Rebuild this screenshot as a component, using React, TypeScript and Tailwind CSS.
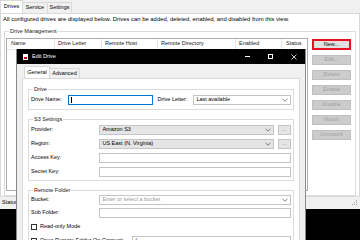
import React from "react";

const F = { fontFamily: '"Liberation Sans", Arial, sans-serif' };

function Chevron() {
  return (
    <svg width="6" height="4" viewBox="0 0 6 4" className="shrink-0">
      <path d="M0.5 0.8 L3 3.2 L5.5 0.8" fill="none" stroke="#606060" strokeWidth="0.8" />
    </svg>
  );
}

function Btn({ label, primary }: { label: string; primary?: boolean }) {
  return primary ? (
    <div className="h-[11px] w-[39px] border-2 border-[#e81123] bg-[#e1e1e1] flex items-center justify-center text-black">
      {label}
    </div>
  ) : (
    <div className="h-[10px] w-[39px] border border-[#bfbfbf] bg-[#cccccc] flex items-center justify-center text-[#a0a0a0]">
      {label}
    </div>
  );
}

function Group({ label, className, children }: { label: string; className?: string; children?: React.ReactNode }) {
  return (
    <div className={"relative border border-[#dcdcdc] " + (className || "")}>
      <div className="absolute -top-[4px] left-[4px] bg-white px-[1px] leading-[7px] text-[#202020]">{label}</div>
      {children}
    </div>
  );
}

export default function App() {
  return (
    <div className="relative w-[360px] h-[240px] bg-black overflow-hidden text-[5.5px] leading-none" style={F}>
      {/* main window */}
      <div className="w-[360px] h-[209px] bg-[#f0f0f0] flex flex-col">
        {/* tabs */}
        <div className="h-[13px] flex items-end">
          <div className="h-[13px] w-[23px] bg-white border border-b-0 border-[#d9d9d9] flex items-center justify-center text-black">Drives</div>
          <div className="h-[11px] w-[25px] border-t border-r border-[#d9d9d9] flex items-center justify-center text-black">Service</div>
          <div className="h-[11px] w-[24px] border-t border-r border-[#d9d9d9] flex items-center justify-center text-black">Settings</div>
        </div>
        {/* tab panel */}
        <div className="h-[184px] bg-white border border-[#d9d9d9] flex flex-col">
          <div className="h-[11px] flex items-center pl-[2px] text-black text-[5.9px]">
            All configured drives are displayed below. Drives can be added, deleted, enabled, and disabled from this view.
          </div>
          <div className="pt-[6px] px-[3px] flex-1 flex">
            <Group label="Drive Management" className="flex-1 flex pt-[6px] pl-[1px] pb-[4px] pr-[3px] gap-[4px]">
              <div className="w-[302px] border border-[#adadad] bg-white flex flex-col">
                <div className="h-[11px] flex items-center border-b border-[#e5e5e5] text-[#202020]">
                  <div className="w-[48px] pl-[4px] border-r border-[#e5e5e5] h-full flex items-center">Name</div>
                  <div className="w-[47px] pl-[3px] border-r border-[#e5e5e5] h-full flex items-center">Drive Letter</div>
                  <div className="w-[56px] pl-[3px] border-r border-[#e5e5e5] h-full flex items-center">Remote Host</div>
                  <div className="w-[78px] pl-[3px] border-r border-[#e5e5e5] h-full flex items-center">Remote Directory</div>
                  <div className="w-[46px] pl-[3px] border-r border-[#e5e5e5] h-full flex items-center">Enabled</div>
                  <div className="flex-1 pl-[4px] h-full flex items-center">Status</div>
                </div>
              </div>
              <div className="flex flex-col gap-[5px] pt-[1px]">
                <Btn label="New..." primary />
                <Btn label="Edit..." />
                <Btn label="Delete" />
                <Btn label="Enable" />
                <Btn label="Disable" />
                <Btn label="Mount" />
                <Btn label="Unmount" />
              </div>
            </Group>
          </div>
        </div>
        {/* status bar */}
        <div className="flex-1 flex items-center justify-between px-[2px] text-black">
          <span>Status</span>
          <svg width="6" height="6" viewBox="0 0 6 6">
            <rect x="4" y="0" width="1" height="1" fill="#a0a0a0" />
            <rect x="2" y="2" width="1" height="1" fill="#a0a0a0" />
            <rect x="4" y="2" width="1" height="1" fill="#a0a0a0" />
            <rect x="0" y="4" width="1" height="1" fill="#a0a0a0" />
            <rect x="2" y="4" width="1" height="1" fill="#a0a0a0" />
            <rect x="4" y="4" width="1" height="1" fill="#a0a0a0" />
          </svg>
        </div>
      </div>

      {/* dialog */}
      <div className="absolute left-[16px] top-[49px] w-[290px] h-[200px] bg-[#f0f0f0] border-x border-[#8a8a8a] flex flex-col">
        <div className="h-[15px] bg-black flex items-center text-white shrink-0">
          <div className="ml-[6px] w-[5px] h-[6px] bg-white relative">
            <div className="absolute left-[1px] bottom-[1px] w-[3px] h-[2px] bg-[#d0021b]" />
          </div>
          <span className="ml-[4px]">Edit Drive</span>
          <div className="ml-auto flex items-center">
            <div className="w-[23px] flex justify-center"><div className="w-[5px] h-px bg-white" /></div>
            <div className="w-[23px] flex justify-center"><div className="w-[5px] h-[5px] border border-white" /></div>
            <div className="w-[23px] flex justify-center">
              <svg width="6" height="6" viewBox="0 0 6 6"><path d="M0.5 0.5 L5.5 5.5 M5.5 0.5 L0.5 5.5" stroke="white" strokeWidth="0.8" /></svg>
            </div>
          </div>
        </div>
        <div className="px-[5px] pt-[2px] flex flex-col flex-1">
          <div className="h-[12px] flex items-end pl-[2px]">
            <div className="h-[12px] w-[26px] bg-white border border-b-0 border-[#d9d9d9] flex items-center justify-center text-black">General</div>
            <div className="h-[10px] w-[30px] border-t border-r border-[#d9d9d9] flex items-center justify-center text-black">Advanced</div>
          </div>
          <div className="flex-1 bg-white border border-[#d9d9d9] px-[5px] pt-[10px] flex flex-col gap-[9px]">
            <Group label="Drive" className="h-[21px] flex items-center px-[2px]">
              <span className="w-[37px] text-black">Drive Name:</span>
              <div className="w-[85px] h-[10px] border border-[#0078d7] bg-white flex items-center pl-[2px]">
                <div className="w-px h-[6px] bg-black" />
              </div>
              <span className="ml-[5px] w-[36px] text-black">Drive Letter:</span>
              <div className="w-[98px] h-[10px] border border-[#c4c4c4] bg-white flex items-center justify-between px-[2px] text-black">
                <span>Last available</span>
                <Chevron />
              </div>
            </Group>
            <Group label="S3 Settings" className="h-[62px] flex flex-col px-[2px] pt-[5px] gap-[4px]">
              <div className="flex items-center h-[10px]">
                <span className="w-[69px] text-black">Provider:</span>
                <div className="w-[176px] h-[10px] border border-[#c4c4c4] bg-[#e5e5e5] flex items-center justify-between px-[2px] text-black">
                  <span>Amazon S3</span><Chevron />
                </div>
                <div className="ml-[4px] w-[13px] h-[10px] border border-[#c4c4c4] bg-[#e5e5e5] flex items-center justify-center text-[#808080]">...</div>
              </div>
              <div className="flex items-center h-[10px]">
                <span className="w-[69px] text-black">Region:</span>
                <div className="w-[176px] h-[10px] border border-[#c4c4c4] bg-[#e5e5e5] flex items-center justify-between px-[2px] text-black">
                  <span>US East (N. Virginia)</span><Chevron />
                </div>
                <div className="ml-[4px] w-[13px] h-[10px] border border-[#c4c4c4] bg-[#e5e5e5] flex items-center justify-center text-[#808080]">...</div>
              </div>
              <div className="flex items-center h-[10px]">
                <span className="w-[69px] text-black">Access Key:</span>
                <div className="w-[193px] h-[10px] border border-[#c4c4c4] bg-white" />
              </div>
              <div className="flex items-center h-[10px]">
                <span className="w-[69px] text-black">Secret Key:</span>
                <div className="w-[193px] h-[10px] border border-[#c4c4c4] bg-white" />
              </div>
            </Group>
            <Group label="Remote Folder" className="h-[70px] flex flex-col px-[2px] pt-[4px] gap-[3px]">
              <div className="flex items-center h-[10px]">
                <span className="w-[69px] text-black">Bucket:</span>
                <div className="w-[193px] h-[10px] border border-[#c4c4c4] bg-white flex items-center justify-between px-[2px] text-[#9a9a9a]">
                  <span>Enter or select a bucket</span><Chevron />
                </div>
              </div>
              <div className="flex items-center h-[10px]">
                <span className="w-[69px] text-black">Sub Folder:</span>
                <div className="w-[193px] h-[10px] border border-[#c4c4c4] bg-white" />
              </div>
              <div className="flex items-center h-[10px] gap-[3px] mt-[1px]">
                <div className="w-[6px] h-[6px] border border-[#333] bg-white" />
                <span className="text-black">Read-only Mode</span>
              </div>
              <div className="flex items-start h-[10px] gap-[3px] mt-[1px]">
                <div className="mt-[2px] w-[6px] h-[6px] border border-[#333] bg-white flex items-center justify-center">
                  <svg width="4" height="4" viewBox="0 0 4 4"><path d="M0.5 2 L1.6 3.1 L3.6 0.8" fill="none" stroke="#333" strokeWidth="0.7" /></svg>
                </div>
                <span className="mt-[2px] text-black w-[91px]">Open Remote Folder On Connect:</span>
                <div className="w-[162px] h-[10px] border border-[#c4c4c4] bg-white pl-[2px] flex items-center">/</div>
              </div>
            </Group>
          </div>
        </div>
      </div>
    </div>
  );
}
